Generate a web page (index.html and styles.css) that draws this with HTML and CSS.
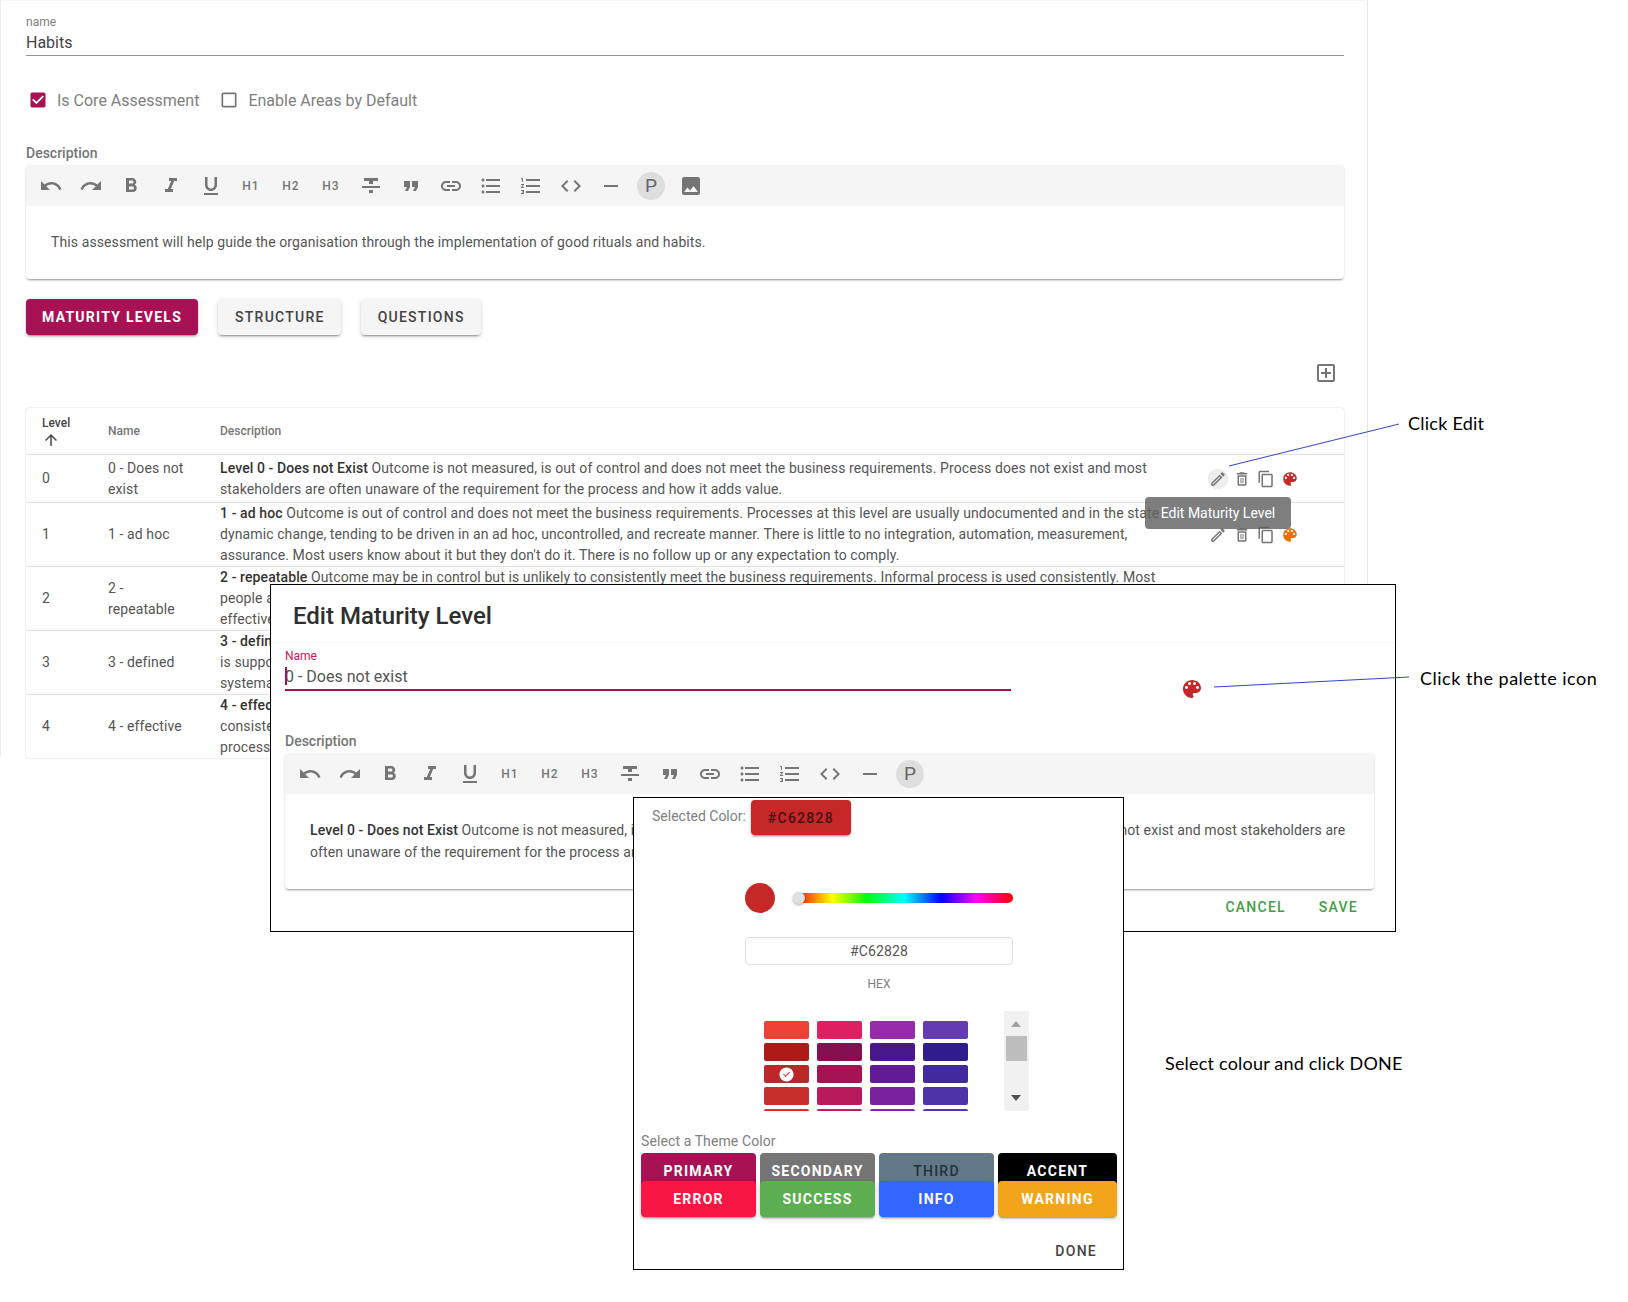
FILE: index.html
```html
<!DOCTYPE html>
<html lang="en">

<head>
    <meta charset="UTF-8">
    <meta name="viewport" content="width=device-width, initial-scale=1.0">
    <title>Edit Maturity Level</title>
    <link rel="stylesheet" href="styles.css">
</head>

<body>

    <!-- icons -->
    <svg class="sprite" xmlns="http://www.w3.org/2000/svg">
        <symbol id="i-undo" viewBox="0 0 24 24"><path d="M12.5 8c-2.65 0-5.05.99-6.9 2.6L2 7v9h9l-3.62-3.62c1.39-1.16 3.16-1.88 5.12-1.88 3.54 0 6.55 2.31 7.6 5.5l2.37-.78C21.08 11.03 17.15 8 12.5 8z"/></symbol>
        <symbol id="i-redo" viewBox="0 0 24 24"><path d="M18.4 10.6C16.55 8.99 14.15 8 11.5 8c-4.65 0-8.58 3.03-9.96 7.22L3.9 16c1.05-3.19 4.05-5.5 7.6-5.5 1.95 0 3.73.72 5.12 1.88L13 16h9V7l-3.6 3.6z"/></symbol>
        <symbol id="i-bold" viewBox="0 0 24 24"><path d="M15.6 10.79c.97-.67 1.65-1.77 1.65-2.79 0-2.26-1.75-4-4-4H7v14h7.04c2.09 0 3.71-1.7 3.71-3.79 0-1.52-.86-2.82-2.15-3.42zM10 6.5h3c.83 0 1.5.67 1.5 1.5s-.67 1.5-1.5 1.5h-3v-3zm3.5 9H10v-3h3.5c.83 0 1.5.67 1.5 1.5s-.67 1.5-1.5 1.5z"/></symbol>
        <symbol id="i-italic" viewBox="0 0 24 24"><path d="M10 4v3h2.21l-3.42 8H6v3h8v-3h-2.21l3.42-8H18V4z"/></symbol>
        <symbol id="i-underline" viewBox="0 0 24 24"><path d="M12 17c3.31 0 6-2.69 6-6V3h-2.5v8c0 1.93-1.57 3.5-3.5 3.5S8.5 12.93 8.5 11V3H6v8c0 3.31 2.69 6 6 6zm-7 2v2h14v-2H5z"/></symbol>
        <symbol id="i-strike" viewBox="0 0 24 24"><path d="M10 19h4v-3h-4v3zM5 4v3h5v3h4V7h5V4H5zM3 14h18v-2H3v2z"/></symbol>
        <symbol id="i-quote" viewBox="0 0 24 24"><path d="M6 17h3l2-4V7H5v6h3zm8 0h3l2-4V7h-6v6h3z"/></symbol>
        <symbol id="i-link" viewBox="0 0 24 24"><path d="M3.9 12c0-1.71 1.39-3.1 3.1-3.1h4V7H7c-2.76 0-5 2.24-5 5s2.24 5 5 5h4v-1.9H7c-1.71 0-3.1-1.39-3.1-3.1zM8 13h8v-2H8v2zm9-6h-4v1.9h4c1.71 0 3.1 1.39 3.1 3.1s-1.39 3.1-3.1 3.1h-4V17h4c2.76 0 5-2.24 5-5s-2.24-5-5-5z"/></symbol>
        <symbol id="i-bullets" viewBox="0 0 24 24"><path d="M4 10.5c-.83 0-1.5.67-1.5 1.5s.67 1.5 1.5 1.5 1.5-.67 1.5-1.5-.67-1.5-1.5-1.5zm0-6c-.83 0-1.5.67-1.5 1.5S3.17 7.5 4 7.5 5.5 6.83 5.5 6 4.83 4.5 4 4.5zm0 12c-.83 0-1.5.68-1.5 1.5s.68 1.5 1.5 1.5 1.5-.68 1.5-1.5-.67-1.5-1.5-1.5zM7 19h14v-2H7v2zm0-6h14v-2H7v2zm0-8v2h14V5H7z"/></symbol>
        <symbol id="i-numbers" viewBox="0 0 24 24"><path d="M2 17h2v.5H3v1h1v.5H2v1h3v-4H2v1zm1-9h1V4H2v1h1v3zm-1 3h1.8L2 13.1v.9h3v-1H3.2L5 10.9V10H2v1zm5-6v2h14V5H7zm0 14h14v-2H7v2zm0-6h14v-2H7v2z"/></symbol>
        <symbol id="i-code" viewBox="0 0 24 24"><path d="M9.4 16.6L4.8 12l4.6-4.6L8 6l-6 6 6 6 1.4-1.4zm5.2 0l4.6-4.6-4.6-4.6L16 6l6 6-6 6-1.4-1.4z"/></symbol>
        <symbol id="i-minus" viewBox="0 0 24 24"><path d="M19 13H5v-2h14v2z"/></symbol>
        <symbol id="i-image" viewBox="0 0 24 24"><path d="M21 19V5c0-1.1-.9-2-2-2H5c-1.1 0-2 .9-2 2v14c0 1.1.9 2 2 2h14c1.1 0 2-.9 2-2zM8.5 13.5l2.5 3.01L14.5 12l4.5 6H5l3.5-4.5z"/></symbol>
        <symbol id="i-palette" viewBox="0 0 24 24"><path d="M12 3c-4.97 0-9 4.03-9 9s4.03 9 9 9c.83 0 1.5-.67 1.5-1.5 0-.39-.15-.74-.39-1.01-.23-.26-.38-.61-.38-.99 0-.83.67-1.5 1.5-1.5H16c2.76 0 5-2.24 5-5 0-4.42-4.03-8-9-8zm-5.5 9c-.83 0-1.5-.67-1.5-1.5S5.67 9 6.5 9 8 9.67 8 10.5 7.33 12 6.5 12zm3-4C8.67 8 8 7.33 8 6.5S8.67 5 9.5 5s1.5.67 1.5 1.5S10.33 8 9.5 8zm5 0c-.83 0-1.5-.67-1.5-1.5S13.67 5 14.5 5s1.5.67 1.5 1.5S15.33 8 14.5 8zm3 4c-.83 0-1.5-.67-1.5-1.5S16.67 9 17.5 9s1.5.67 1.5 1.5-.67 1.5-1.5 1.5z"/></symbol>
        <symbol id="i-edit" viewBox="0 0 24 24"><path d="M14.06 9.02l.92.92L5.92 19H5v-.92l9.06-9.06M17.66 3c-.25 0-.51.1-.7.29l-1.83 1.83 3.75 3.75 1.83-1.83c.39-.39.39-1.02 0-1.41l-2.34-2.34c-.2-.2-.45-.29-.71-.29zm-3.6 3.19L3 17.25V21h3.75L17.81 9.94l-3.75-3.75z"/></symbol>
        <symbol id="i-delete" viewBox="0 0 24 24"><path d="M6 19c0 1.1.9 2 2 2h8c1.1 0 2-.9 2-2V7H6v12zM8 9h8v10H8V9zm7.5-5l-1-1h-5l-1 1H5v2h14V4zM10 10.5h1.3v7H10zm2.7 0H14v7h-1.3z"/></symbol>
        <symbol id="i-copy" viewBox="0 0 24 24"><path d="M16 1H4c-1.1 0-2 .9-2 2v14h2V3h12V1zm3 4H8c-1.1 0-2 .9-2 2v14c0 1.1.9 2 2 2h11c1.1 0 2-.9 2-2V7c0-1.1-.9-2-2-2zm0 16H8V7h11v14z"/></symbol>
        <symbol id="i-add-box" viewBox="0 0 24 24"><path d="M19 3H5a2 2 0 0 0-2 2v14a2 2 0 0 0 2 2h14a2 2 0 0 0 2-2V5a2 2 0 0 0-2-2m0 16H5V5h14v14m-8-2h2v-4h4v-2h-4V7h-2v4H7v2h4v4z"/></symbol>
        <symbol id="i-up" viewBox="0 0 24 24"><path d="M4 12l1.41 1.41L11 7.83V20h2V7.83l5.58 5.59L20 12l-8-8-8 8z"/></symbol>
        <symbol id="i-checked" viewBox="0 0 24 24"><path d="M19 3H5c-1.11 0-2 .9-2 2v14c0 1.1.89 2 2 2h14c1.11 0 2-.9 2-2V5c0-1.1-.89-2-2-2zm-9 14l-5-5 1.41-1.41L10 14.17l7.59-7.59L19 8l-9 9z"/></symbol>
        <symbol id="i-unchecked" viewBox="0 0 24 24"><path d="M19 5v14H5V5h14m0-2H5c-1.1 0-2 .9-2 2v14c0 1.1.9 2 2 2h14c1.1 0 2-.9 2-2V5c0-1.1-.9-2-2-2z"/></symbol>
        <symbol id="i-check-circle" viewBox="0 0 24 24"><circle cx="12" cy="12" r="10" fill="#fff"/><path d="M10 17l-5-5 1.41-1.41L10 14.17l7.59-7.59L19 8z" fill="#d0323c" transform="translate(3.6 3.6) scale(.7)"/></symbol>
    </svg>

    <main class="page">
        <div class="field">
            <div class="field-label">name</div>
            <div class="field-value">Habits</div>
        </div>

        <div class="checks">
            <label class="check"><svg class="check-box primary"><use href="#i-checked"></use></svg>Is Core Assessment</label>
            <label class="check"><svg class="check-box"><use href="#i-unchecked"></use></svg>Enable Areas by Default</label>
        </div>

        <div class="section-label">Description</div>
        <div class="editor">
            <div class="toolbar">
                <span class="tool"><svg><use href="#i-undo"></use></svg></span>
                <span class="tool"><svg><use href="#i-redo"></use></svg></span>
                <span class="tool"><svg><use href="#i-bold"></use></svg></span>
                <span class="tool"><svg><use href="#i-italic"></use></svg></span>
                <span class="tool"><svg><use href="#i-underline"></use></svg></span>
                <span class="tool tool-text">H1</span>
                <span class="tool tool-text">H2</span>
                <span class="tool tool-text">H3</span>
                <span class="tool"><svg><use href="#i-strike"></use></svg></span>
                <span class="tool"><svg><use href="#i-quote"></use></svg></span>
                <span class="tool"><svg><use href="#i-link"></use></svg></span>
                <span class="tool"><svg><use href="#i-bullets"></use></svg></span>
                <span class="tool"><svg><use href="#i-numbers"></use></svg></span>
                <span class="tool"><svg><use href="#i-code"></use></svg></span>
                <span class="tool"><svg><use href="#i-minus"></use></svg></span>
                <span class="tool"><b class="para">P</b></span>
                <span class="tool"><svg><use href="#i-image"></use></svg></span>
            </div>
            <div class="editor-body editor-short">This assessment will help guide the organisation through the implementation of good rituals and habits.</div>
        </div>

        <div class="tabs">
            <button class="btn btn-primary">Maturity Levels</button>
            <button class="btn">Structure</button>
            <button class="btn">Questions</button>
        </div>

        <div class="add-row"><svg class="add-icon"><use href="#i-add-box"></use></svg></div>

        <table class="levels">
            <colgroup>
                <col class="col-level">
                <col class="col-name">
                <col class="col-desc">
                <col>
            </colgroup>
            <thead>
                <tr>
                    <th class="sorted">Level<svg class="sort-arrow"><use href="#i-up"></use></svg></th>
                    <th>Name</th>
                    <th>Description</th>
                    <th></th>
                </tr>
            </thead>
            <tbody>
                <tr class="row-short">
                    <td>0</td>
                    <td>0 - Does not exist</td>
                    <td class="desc"><b>Level 0 - Does not Exist</b> Outcome is not measured, is out of control and does not meet the business requirements. Process does not exist and most<br>stakeholders are often unaware of the requirement for the process and how it adds value.</td>
                    <td>
                        <div class="actions">
                            <span class="action action-hover"><svg><use href="#i-edit"></use></svg></span>
                            <span class="action"><svg><use href="#i-delete"></use></svg></span>
                            <span class="action"><svg><use href="#i-copy"></use></svg></span>
                            <span class="action swatch-red"><svg><use href="#i-palette"></use></svg></span>
                        </div>
                    </td>
                </tr>
                <tr>
                    <td>1</td>
                    <td>1 - ad hoc</td>
                    <td class="desc"><b>1 - ad hoc</b> Outcome is out of control and does not meet the business requirements. Processes at this level are usually undocumented and in the state<br>dynamic change, tending to be driven in an ad hoc, uncontrolled, and recreate manner. There is little to no integration, automation, measurement,<br>assurance. Most users know about it but they don't do it. There is no follow up or any expectation to comply.</td>
                    <td>
                        <div class="actions">
                            <span class="action"><svg><use href="#i-edit"></use></svg></span>
                            <span class="action"><svg><use href="#i-delete"></use></svg></span>
                            <span class="action"><svg><use href="#i-copy"></use></svg></span>
                            <span class="action swatch-orange"><svg><use href="#i-palette"></use></svg></span>
                        </div>
                    </td>
                </tr>
                <tr>
                    <td>2</td>
                    <td>2 - repeatable</td>
                    <td class="desc"><b>2 - repeatable</b> Outcome may be in control but is unlikely to consistently meet the business requirements. Informal process is used consistently. Most<br>people are aware of the process, but<br>effectiveness is not measured.</td>
                    <td></td>
                </tr>
                <tr>
                    <td>3</td>
                    <td>3 - defined</td>
                    <td class="desc"><b>3 - defined</b> Outcome is in control and usually meets the requirements.<br>is supported by documented process and<br>systematic training.</td>
                    <td></td>
                </tr>
                <tr>
                    <td>4</td>
                    <td>4 - effective</td>
                    <td class="desc"><b>4 - effective</b> Outcome is in control and<br>consistently meets the requirements. The<br>process is measured and improved.</td>
                    <td></td>
                </tr>
            </tbody>
        </table>
    </main>

    <div class="tooltip">Edit Maturity Level</div>

    <section class="dialog">
        <h2 class="dialog-title">Edit Maturity Level</h2>
        <div class="dialog-body">
            <div class="name-row">
                <div class="name-field">
                    <div class="name-label">Name</div>
                    <div class="name-input">0 - Does not exist</div>
                </div>
                <svg class="dialog-palette"><use href="#i-palette"></use></svg>
            </div>

            <div class="section-label dialog-label">Description</div>
            <div class="editor">
                <div class="toolbar">
                    <span class="tool"><svg><use href="#i-undo"></use></svg></span>
                    <span class="tool"><svg><use href="#i-redo"></use></svg></span>
                    <span class="tool"><svg><use href="#i-bold"></use></svg></span>
                    <span class="tool"><svg><use href="#i-italic"></use></svg></span>
                    <span class="tool"><svg><use href="#i-underline"></use></svg></span>
                    <span class="tool tool-text">H1</span>
                    <span class="tool tool-text">H2</span>
                    <span class="tool tool-text">H3</span>
                    <span class="tool"><svg><use href="#i-strike"></use></svg></span>
                    <span class="tool"><svg><use href="#i-quote"></use></svg></span>
                    <span class="tool"><svg><use href="#i-link"></use></svg></span>
                    <span class="tool"><svg><use href="#i-bullets"></use></svg></span>
                    <span class="tool"><svg><use href="#i-numbers"></use></svg></span>
                    <span class="tool"><svg><use href="#i-code"></use></svg></span>
                    <span class="tool"><svg><use href="#i-minus"></use></svg></span>
                    <span class="tool"><b class="para">P</b></span>
                </div>
                <div class="editor-body editor-tall"><b>Level 0 - Does not Exist</b> Outcome is not measured, is out of control and does not meet the business requirements. Process does not exist and most stakeholders are often unaware of the requirement for the process and how it adds value.</div>
            </div>

            <div class="dialog-actions">
                <span class="link-btn">Cancel</span>
                <span class="link-btn">Save</span>
            </div>
        </div>
    </section>

    <section class="picker">
        <div class="selected-row">
            <span class="selected-label">Selected Color:</span>
            <button class="btn btn-selected">#C62828</button>
        </div>

        <div class="picker-main">
            <div class="hue-row">
                <span class="hue-dot"></span>
                <span class="hue-slider"><span class="hue-thumb"></span></span>
            </div>
            <div class="hex-input">#C62828</div>
            <div class="hex-label">HEX</div>
        </div>

        <div class="swatches">
            <div class="swatch-grid">
                <i style="background:#ec4134"></i><i style="background:#e01f63"></i><i style="background:#962aab"></i><i style="background:#653bb4"></i>
                <i style="background:#ad1a17"></i><i style="background:#841050"></i><i style="background:#48178a"></i><i style="background:#301d8c"></i>
                <i class="picked" style="background:#bc2727"><svg><use href="#i-check-circle"></use></svg></i><i style="background:#a61353"></i><i style="background:#631a95"></i><i style="background:#412a9e"></i>
                <i style="background:#c72f2d"></i><i style="background:#b91a5b"></i><i style="background:#7b22a0"></i><i style="background:#4d32a8"></i>
                <i style="background:#d9302d"></i><i style="background:#cc1a5e"></i><i style="background:#8a24a8"></i><i style="background:#5a32b0"></i>
            </div>
            <div class="scrollbar">
                <span class="scroll-up"></span>
                <span class="scroll-thumb"></span>
                <span class="scroll-down"></span>
            </div>
        </div>

        <div class="theme-label">Select a Theme Color</div>
        <div class="theme-grid">
            <span class="theme t-primary">Primary</span>
            <span class="theme t-secondary">Secondary</span>
            <span class="theme t-third">Third</span>
            <span class="theme t-accent">Accent</span>
            <span class="theme t-error">Error</span>
            <span class="theme t-success">Success</span>
            <span class="theme t-info">Info</span>
            <span class="theme t-warning">Warning</span>
        </div>

        <div class="picker-actions"><span class="done">Done</span></div>
    </section>

    <!-- callouts -->
    <svg class="callout-lines" xmlns="http://www.w3.org/2000/svg">
        <line x1="1229" y1="466" x2="1399" y2="424"></line>
        <line x1="1214" y1="687" x2="1409" y2="677"></line>
    </svg>
    <div class="note note-edit">Click Edit</div>
    <div class="note note-palette">Click the palette icon</div>
    <div class="note note-done">Select colour and click DONE</div>

</body>

</html>
```

FILE: styles.css
```css
* {
    box-sizing: border-box;
}

html,
body {
    margin: 0;
    background-color: #ffffff;
}

body {
    position: relative;
    width: 1628px;
    height: 1302px;
    overflow: hidden;
    font-family: 'Roboto', sans-serif;
    font-size: 14px;
    letter-spacing: 0.1px;
    color: #555555;
}

.sprite {
    display: none;
}

/* page behind the dialogs */
.page {
    width: 1368px;
    height: 757px;
    padding: 15px 23px 0 25px;
    border-left: 1px solid #ececec;
    border-right: 1px solid #e6e6e6;
    border-top: 1px solid #f6f6f6;
}

.field-label {
    font-size: 12px;
    line-height: 13px;
    letter-spacing: 0;
    color: #808080;
}

.field-value {
    height: 27px;
    padding-top: 2px;
    font-size: 16px;
    line-height: 24px;
    letter-spacing: 0;
    color: #444444;
    border-bottom: 1px solid #949494;
}

.checks {
    display: flex;
    gap: 20px;
    margin-top: 32px;
    padding-left: 2px;
}

.check {
    display: flex;
    align-items: center;
    height: 24px;
    font-size: 16px;
    letter-spacing: 0;
    color: #808080;
}

.check-box {
    width: 20px;
    height: 20px;
    margin-right: 9px;
    fill: #757575;
}

.check-box.primary {
    fill: #a81153;
}

.section-label {
    margin-top: 33px;
    font-size: 14px;
    line-height: 16px;
    font-weight: 500;
    letter-spacing: 0;
    color: #757575;
}

/* rich text editor */
.editor {
    margin-top: 4px;
    border-radius: 4px;
    background-color: #ffffff;
    box-shadow: 0 2px 2px -1px rgba(0, 0, 0, 0.35), 0 1px 3px rgba(0, 0, 0, 0.12);
    overflow: hidden;
}

.toolbar {
    display: flex;
    align-items: center;
    height: 41px;
    padding-left: 5px;
    background-color: #f5f5f5;
}

.tool {
    display: flex;
    flex: none;
    align-items: center;
    justify-content: center;
    width: 40px;
    height: 40px;
    color: #757575;
}

.tool svg {
    width: 24px;
    height: 24px;
    fill: #757575;
}

.tool-text {
    font-size: 12px;
    font-weight: 500;
    letter-spacing: 1px;
}

.para {
    display: flex;
    align-items: center;
    justify-content: center;
    width: 28px;
    height: 28px;
    border-radius: 50%;
    background-color: #dedede;
    font-size: 19px;
    font-weight: 400;
    color: #666666;
}

.editor-body {
    padding: 0 25px;
    color: #555555;
}

.editor-short {
    height: 73px;
    line-height: 73px;
}

.editor-tall {
    height: 95px;
    padding-top: 25px;
    line-height: 22px;
}

.editor-tall b,
.desc b {
    font-weight: 500;
    color: #333333;
}

/* buttons */
.tabs {
    display: flex;
    gap: 20px;
    margin-top: 20px;
}

.btn {
    height: 36px;
    padding: 0 16px 0 17px;
    border: none;
    border-radius: 4px;
    background-color: #f5f5f5;
    color: #444444;
    font-family: inherit;
    font-size: 14px;
    font-weight: 500;
    letter-spacing: 1.25px;
    text-transform: uppercase;
    box-shadow: 0 3px 1px -2px rgba(0, 0, 0, 0.2), 0 2px 2px rgba(0, 0, 0, 0.14), 0 1px 5px rgba(0, 0, 0, 0.12);
}

.btn-primary {
    padding: 0 16px;
    background-color: #a81153;
    color: #ffffff;
    font-weight: 700;
}

.add-row {
    display: flex;
    justify-content: flex-end;
    height: 24px;
    margin-top: 26px;
    padding-right: 6px;
}

.add-icon {
    width: 24px;
    height: 24px;
    fill: #757575;
}

/* levels table */
.levels {
    width: 1318px;
    margin-top: 23px;
    table-layout: fixed;
    border-collapse: separate;
    border-spacing: 0;
    border-radius: 4px;
    box-shadow: 0 0 2px rgba(0, 0, 0, 0.2);
}

.col-level {
    width: 66px;
}

.col-name {
    width: 112px;
}

.col-desc {
    width: 986px;
}

.levels th {
    height: 47px;
    padding: 0 16px;
    border-bottom: 1px solid #e0e0e0;
    font-size: 12px;
    font-weight: 500;
    letter-spacing: 0;
    color: #777777;
    text-align: left;
}

.levels th.sorted {
    padding: 2px 0 0 16px;
    color: #444444;
    line-height: 16px;
}

.sort-arrow {
    display: block;
    width: 18px;
    height: 18px;
    fill: #444444;
}

.levels td {
    height: 64px;
    padding: 0 16px;
    border-bottom: 1px solid #e0e0e0;
    line-height: 21px;
    color: #555555;
    vertical-align: middle;
}

.levels tr.row-short td {
    height: 48px;
}

.levels tbody tr:last-child td {
    height: 62px;
    border-bottom: none;
}

.levels td.desc {
    white-space: nowrap;
}

.actions {
    display: flex;
}

.action {
    display: flex;
    flex: none;
    align-items: center;
    justify-content: center;
    width: 24px;
    height: 24px;
    border-radius: 50%;
}

.action svg {
    width: 18px;
    height: 18px;
    fill: #757575;
}

.action-hover {
    background: radial-gradient(circle, #eeeeee 10px, transparent 10.5px);
}

.swatch-red svg {
    fill: #c62828;
}

.swatch-orange svg {
    fill: #ef6c00;
}

.tooltip {
    position: absolute;
    left: 1145px;
    top: 497px;
    width: 146px;
    height: 32px;
    border-radius: 4px;
    background-color: rgba(97, 97, 97, 0.82);
    color: #ffffff;
    line-height: 32px;
    letter-spacing: 0;
    text-align: center;
}

/* edit dialog */
.dialog {
    position: absolute;
    left: 270px;
    top: 584px;
    width: 1126px;
    height: 348px;
    border: 1px solid #000000;
    background-color: #ffffff;
}

.dialog-title {
    height: 58px;
    margin: 0;
    padding: 15px 22px 0;
    border-bottom: 1px solid #f5f5f5;
    font-size: 24px;
    line-height: 32px;
    font-weight: 500;
    letter-spacing: 0;
    color: #2e2e2e;
}

.dialog-body {
    padding: 5px 21px 0 14px;
}

.name-row {
    display: flex;
    align-items: flex-end;
}

.name-field {
    width: 726px;
}

.name-label {
    font-size: 12px;
    line-height: 16px;
    letter-spacing: 0;
    color: #c2185b;
}

.name-input {
    position: relative;
    height: 27px;
    padding-top: 1px;
    border-bottom: 2px solid #a81153;
    font-size: 16px;
    line-height: 24px;
    letter-spacing: 0;
    color: #555555;
}

.name-input::before {
    content: "";
    position: absolute;
    left: 0;
    top: 3px;
    width: 2px;
    height: 18px;
    background-color: #a81153;
}

.dialog-palette {
    width: 24px;
    height: 24px;
    margin-left: 169px;
    margin-bottom: -10px;
    fill: #c62828;
}

.dialog-label {
    margin-top: 42px;
}

.dialog-actions {
    display: flex;
    justify-content: flex-end;
    gap: 33px;
    margin-top: 9px;
    padding-right: 16px;
}

.link-btn {
    line-height: 18px;
    font-weight: 500;
    letter-spacing: 1.25px;
    text-transform: uppercase;
    color: #43a047;
}

/* colour picker */
.picker {
    position: absolute;
    left: 633px;
    top: 797px;
    width: 491px;
    height: 473px;
    border: 1px solid #000000;
    background-color: #ffffff;
}

.selected-row {
    display: flex;
    gap: 5px;
    padding: 2px 0 0 18px;
}

.selected-label {
    margin-top: 8px;
    line-height: 16px;
    letter-spacing: 0;
    color: #808080;
}

.btn-selected {
    width: 100px;
    height: 35px;
    padding: 0;
    background-color: #c62828;
    color: #4a0f0f;
}

.picker-main {
    width: 268px;
    margin: 48px 0 0 111px;
}

.hue-row {
    display: flex;
    align-items: center;
    gap: 20px;
}

.hue-dot {
    width: 30px;
    height: 30px;
    border-radius: 50%;
    background-color: #c62828;
}

.hue-slider {
    position: relative;
    width: 218px;
    height: 10px;
    border-radius: 5px;
    background: linear-gradient(to right, #ff0000, #ffff00 17%, #00ff00 33%, #00ffff 50%, #0000ff 67%, #ff00ff 83%, #ff0000);
}

.hue-thumb {
    position: absolute;
    left: -2px;
    top: -1px;
    width: 12px;
    height: 12px;
    border-radius: 50%;
    background-color: #e0e0e0;
    box-shadow: 0 1px 3px rgba(0, 0, 0, 0.35);
}

.hex-input {
    height: 28px;
    margin-top: 24px;
    border: 1px solid #e0e0e0;
    border-radius: 4px;
    line-height: 26px;
    text-align: center;
    color: #555555;
}

.hex-label {
    margin-top: 10px;
    font-size: 12px;
    line-height: 18px;
    letter-spacing: 0;
    text-align: center;
    color: #808080;
}

.swatches {
    display: flex;
    gap: 36px;
    margin: 18px 0 0 130px;
}

.swatch-grid {
    display: grid;
    grid-template-columns: repeat(4, 45px);
    grid-auto-rows: 18px;
    gap: 4px 8px;
    width: 204px;
    height: 100px;
    padding-top: 10px;
    overflow: hidden;
}

.swatch-grid i {
    display: flex;
    align-items: center;
    justify-content: center;
    border-radius: 2px;
}

.swatch-grid svg {
    width: 17px;
    height: 17px;
}

.scrollbar {
    position: relative;
    width: 25px;
    height: 100px;
    border-radius: 0 0 3px 3px;
    background-color: #f1f1f1;
}

.scroll-up,
.scroll-down {
    position: absolute;
    left: 7px;
    width: 0;
    height: 0;
    border-left: 5.5px solid transparent;
    border-right: 5.5px solid transparent;
}

.scroll-up {
    top: 10px;
    border-bottom: 6px solid #a3a3a3;
}

.scroll-down {
    bottom: 10px;
    border-top: 6px solid #505050;
}

.scroll-thumb {
    position: absolute;
    left: 2px;
    top: 25px;
    width: 21px;
    height: 25px;
    background-color: #bdbdbd;
}

.theme-label {
    margin: 20px 0 0 7px;
    line-height: 20px;
    color: #808080;
}

.theme-grid {
    display: grid;
    grid-template-columns: 115px 115px 115px 119px;
    gap: 0 4px;
    margin: 2px 0 0 7px;
}

.theme {
    height: 36px;
    border-radius: 4px;
    font-weight: 700;
    letter-spacing: 1.25px;
    line-height: 36px;
    text-align: center;
    text-transform: uppercase;
    color: #ffffff;
}

.t-error,
.t-success,
.t-info,
.t-warning {
    margin-top: -8px;
    box-shadow: 0 3px 1px -2px rgba(0, 0, 0, 0.2), 0 2px 2px rgba(0, 0, 0, 0.14), 0 1px 5px rgba(0, 0, 0, 0.12);
}

.t-primary {
    background-color: #a81153;
}

.t-secondary {
    background-color: #757575;
}

.t-third {
    background-color: #607888;
    color: #25303a;
    font-weight: 500;
}

.t-accent {
    background-color: #000000;
}

.t-error {
    background-color: #f81645;
}

.t-success {
    background-color: #5cae50;
}

.t-info {
    background-color: #3366ff;
}

.t-warning {
    background-color: #f2a51b;
}

.picker-actions {
    display: flex;
    justify-content: flex-end;
    margin-top: 25px;
    padding-right: 26px;
}

.done {
    line-height: 18px;
    font-weight: 500;
    letter-spacing: 1.25px;
    text-transform: uppercase;
    color: #444444;
}

/* callouts */
.callout-lines {
    position: absolute;
    left: 0;
    top: 0;
    width: 1628px;
    height: 1302px;
    pointer-events: none;
}

.callout-lines line {
    stroke: #3344cc;
    stroke-width: 1;
}

.note {
    position: absolute;
    font-family: 'Lato', sans-serif;
    font-size: 18px;
    line-height: 24px;
    color: #000000;
}

.note-edit {
    left: 1408px;
    top: 411px;
    letter-spacing: 0.25px;
}

.note-palette {
    left: 1420px;
    top: 666px;
    letter-spacing: 0.5px;
}

.note-done {
    left: 1165px;
    top: 1051px;
    letter-spacing: 0.2px;
}
```
